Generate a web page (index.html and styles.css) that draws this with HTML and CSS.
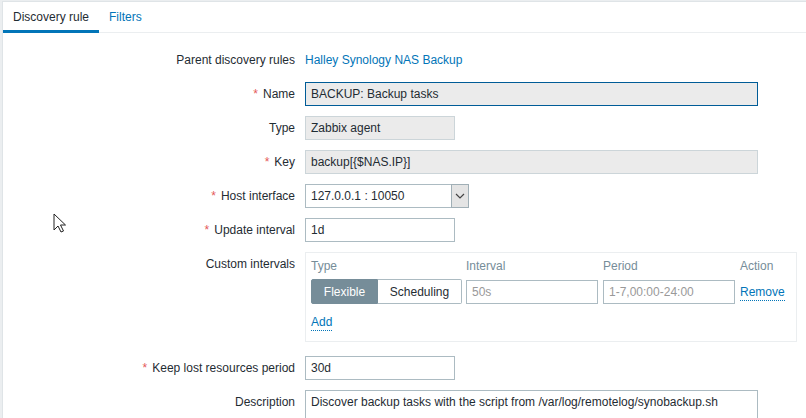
FILE: index.html
```html
<!DOCTYPE html>
<html lang="en">
<head>
<meta charset="utf-8">
<title>Discovery rule</title>
<link rel="stylesheet" href="styles.css">
</head>
<body>
<main class="panel">
  <nav class="tabs">
    <a class="tab tab-active" href="#rule">Discovery rule</a>
    <a class="tab" href="#filters">Filters</a>
  </nav>
  <form class="form" id="rule">
    <div class="row">
      <span class="label">Parent discovery rules</span>
      <div class="field"><a class="link" href="#parent">Halley Synology NAS Backup</a></div>
    </div>
    <div class="row">
      <label class="label required" for="name">Name</label>
      <div class="field"><input class="input wide readonly focused" id="name" type="text" readonly value="BACKUP: Backup tasks"></div>
    </div>
    <div class="row">
      <label class="label" for="type">Type</label>
      <div class="field"><input class="input readonly" id="type" type="text" readonly value="Zabbix agent"></div>
    </div>
    <div class="row">
      <label class="label required" for="key">Key</label>
      <div class="field"><input class="input wide readonly" id="key" type="text" readonly value="backup[{$NAS.IP}]"></div>
    </div>
    <div class="row">
      <label class="label required" for="interface">Host interface</label>
      <div class="field">
        <div class="select-wrap">
          <select class="input select" id="interface"><option>127.0.0.1 : 10050</option></select>
          <span class="select-arrow"><svg width="10" height="6" viewBox="0 0 10 6"><path d="M1 1l4 4 4-4" fill="none" stroke="#444" stroke-width="1.2"/></svg></span>
        </div>
      </div>
    </div>
    <div class="row">
      <label class="label required" for="update">Update interval</label>
      <div class="field"><input class="input" id="update" type="text" value="1d"></div>
    </div>
    <div class="row row-intervals">
      <span class="label">Custom intervals</span>
      <div class="intervals">
        <table class="table">
          <thead>
            <tr><th>Type</th><th>Interval</th><th>Period</th><th>Action</th></tr>
          </thead>
          <tbody>
            <tr>
              <td>
                <div class="segments">
                  <button class="segment segment-on" type="button">Flexible</button>
                  <button class="segment" type="button">Scheduling</button>
                </div>
              </td>
              <td><input class="input small" type="text" placeholder="50s" aria-label="Interval"></td>
              <td><input class="input small" type="text" placeholder="1-7,00:00-24:00" aria-label="Period"></td>
              <td><button class="link-button" type="button">Remove</button></td>
            </tr>
            <tr><td colspan="4"><button class="link-button" type="button">Add</button></td></tr>
          </tbody>
        </table>
      </div>
    </div>
    <div class="row">
      <label class="label required" for="keep">Keep lost resources period</label>
      <div class="field"><input class="input" id="keep" type="text" value="30d"></div>
    </div>
    <div class="row">
      <label class="label" for="description">Description</label>
      <div class="field"><textarea class="input wide textarea" id="description" rows="1">Discover backup tasks with the script from /var/log/remotelog/synobackup.sh</textarea></div>
    </div>
  </form>
</main>
<svg class="cursor" width="13" height="20" viewBox="0 0 13 20"><path d="M1 1v16l4-4 3 6 2.500-1-3-6h5z" fill="#fff" stroke="#222" stroke-width="1"/></svg>
</body>
</html>
```
FILE: styles.css
```css
* {
  box-sizing: border-box;
}

body {
  display: flex;
  flex-direction: column;
  margin: 0;
  height: 100vh;
  overflow: hidden;
  padding: 1px 0 0 2px;
  background: #ebeef0;
  color: #1f2c33;
  font: 12px/24px "Liberation Sans", Arial, sans-serif;
}

.panel {
  display: flex;
  flex: 1;
  flex-direction: column;
  background: #fff;
  border: 1px solid #dfe4e7;
  border-width: 1px 0 0 1px;
}

.tabs {
  display: flex;
  border-bottom: 1px solid #ebeef0;
}

.tab {
  padding: 3px 10px 1px;
  margin-bottom: -1px;
  color: #0275b8;
  text-decoration: none;
  border-bottom: 3px solid transparent;
}

.tab-active {
  color: #1f2c33;
  border-bottom-color: #0275b8;
}

.form {
  display: flex;
  flex: 1;
  flex-direction: column;
  gap: 10px;
  padding-top: 15px;
}

.row {
  display: grid;
  grid-template-columns: 292px minmax(0, 1fr);
  gap: 10px;
  padding-right: 9px;
}

.row:last-child {
  flex: 1;
}

.row-intervals {
  margin-bottom: 4px;
}

.label {
  text-align: right;
}

.required::before {
  content: "*";
  margin-right: 5px;
  color: #e45959;
}

.field {
  display: flex;
}

.link {
  color: #0275b8;
  text-decoration: none;
}

.input {
  width: 150px;
  height: 24px;
  margin: 0;
  padding: 0 5px;
  border: 1px solid #acbbc2;
  border-radius: 0;
  background: #fff;
  color: #1f2c33;
  font: inherit;
  line-height: 22px;
  outline: 0;
}

.wide {
  width: 100%;
  max-width: 453px;
}

.readonly {
  background: #ebebeb;
  border-color: #ccd5d9;
}

.focused {
  border-color: #005c97;
}

.input::placeholder {
  color: #999;
  opacity: 1;
}

.textarea {
  height: 100%;
  border-bottom: 0;
  resize: none;
  overflow: hidden;
}

.select-wrap {
  position: relative;
}

.select {
  display: block;
  width: 164px;
  appearance: none;
}

.select-arrow {
  position: absolute;
  top: 0;
  right: 0;
  width: 18px;
  height: 24px;
  display: flex;
  align-items: center;
  justify-content: center;
  background: #e4e4e4;
  border: 1px solid #a0afb6;
  pointer-events: none;
}

.intervals {
  max-width: 492px;
  padding: 1px 5px 2px;
  border: 1px solid #ebeef0;
}

.table {
  border-collapse: collapse;
}

.table th {
  padding: 0;
  color: #768d99;
  font-weight: normal;
  text-align: left;
}

.table td {
  padding: 1px 5px 5px 0;
  vertical-align: bottom;
}

.table td:first-child {
  padding-right: 4px;
}

.table td:last-child {
  padding-right: 0;
}

.small {
  display: block;
  width: 132px;
}

.segments {
  display: flex;
  width: 151px;
}

.segment {
  flex: 1 0 auto;
  height: 25px;
  padding: 0 11px;
  border: 1px solid #acbbc2;
  border-left: 0;
  border-radius: 0 2px 2px 0;
  background: #fff;
  color: #1f2c33;
  font: inherit;
}

.segment-on {
  border: 1px solid #768d99;
  border-radius: 2px 0 0 2px;
  background: #768d99;
  color: #fff;
}

.link-button {
  padding: 0;
  border: 0;
  border-bottom: 1px dotted #0275b8;
  background: none;
  color: #0275b8;
  font: inherit;
  line-height: 16px;
}

.cursor {
  position: absolute;
  left: 53px;
  top: 213px;
}
```
